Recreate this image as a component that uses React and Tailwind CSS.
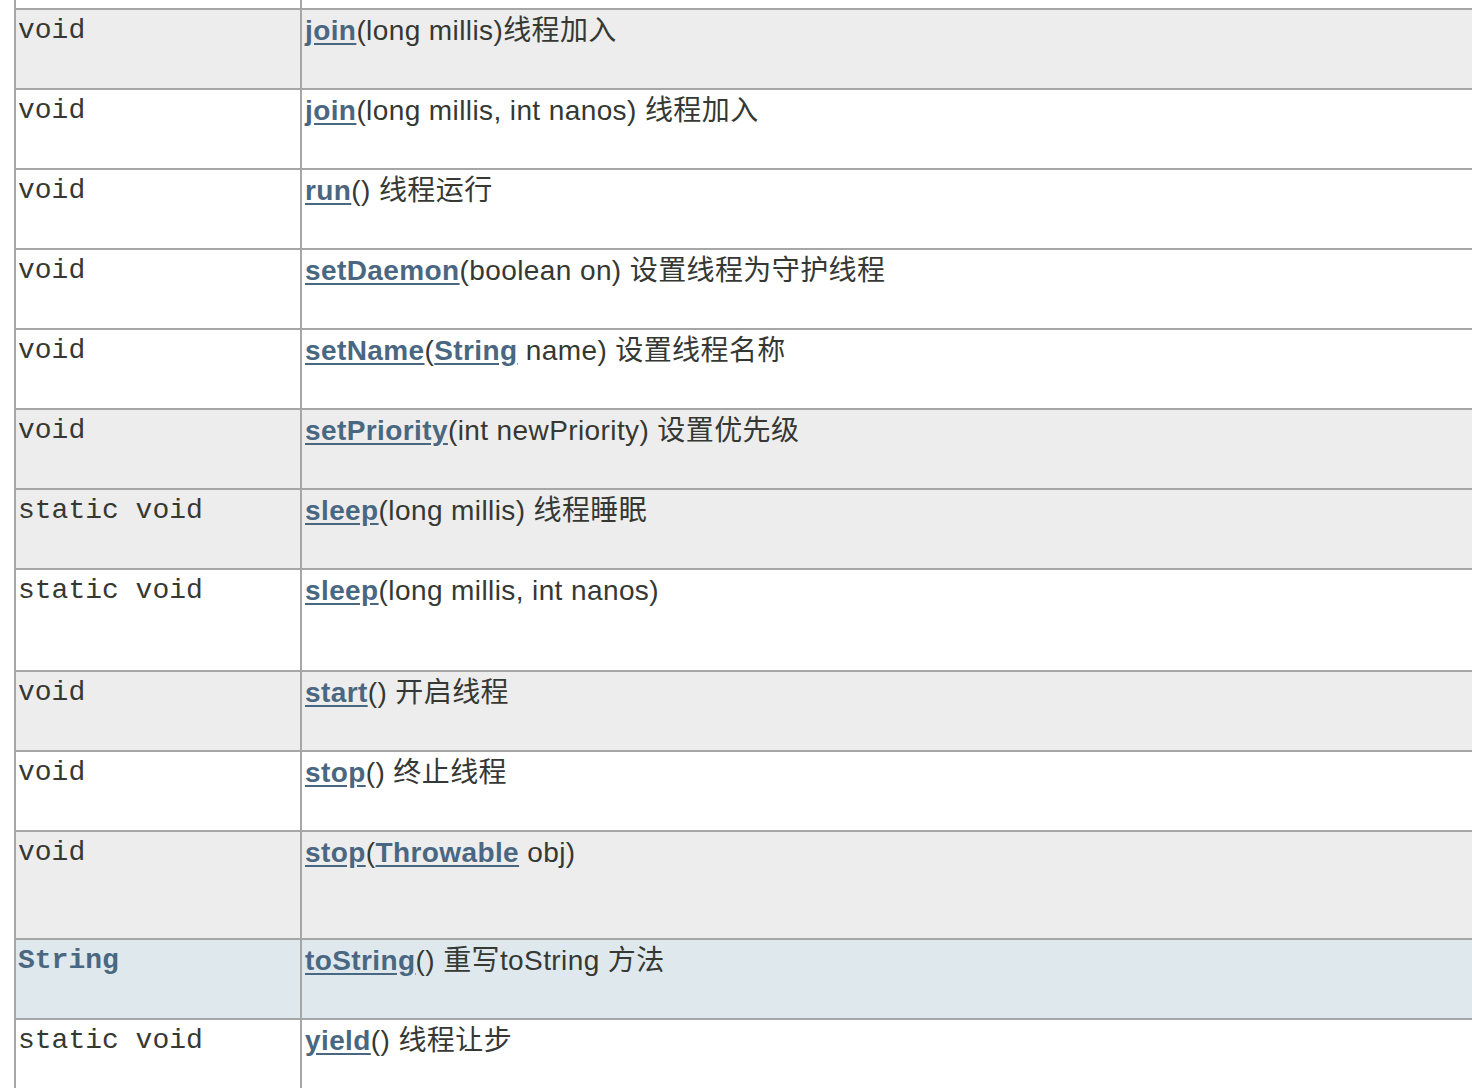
import React from "react";

// rows of the method summary table
const rows = [
  { bg: "bg-[#ededed]", type: "void", parts: [["l", "join"], ["t", "(long millis)线程加入"]] },
  { bg: "bg-white", type: "void", parts: [["l", "join"], ["t", "(long millis, int nanos) 线程加入"]] },
  { bg: "bg-white", type: "void", parts: [["l", "run"], ["t", "() 线程运行"]] },
  { bg: "bg-white", type: "void", parts: [["l", "setDaemon"], ["t", "(boolean on) 设置线程为守护线程"]] },
  { bg: "bg-white", type: "void", parts: [["l", "setName"], ["t", "("], ["l", "String"], ["t", " name) 设置线程名称"]] },
  { bg: "bg-[#ededed]", type: "void", parts: [["l", "setPriority"], ["t", "(int newPriority) 设置优先级"]] },
  { bg: "bg-[#ededed]", type: "static void", parts: [["l", "sleep"], ["t", "(long millis) 线程睡眠"]] },
  { bg: "bg-white", type: "static void", h: "h-[102px]", parts: [["l", "sleep"], ["t", "(long millis, int nanos)"]] },
  { bg: "bg-[#ededed]", type: "void", parts: [["l", "start"], ["t", "() 开启线程"]] },
  { bg: "bg-white", type: "void", parts: [["l", "stop"], ["t", "() 终止线程"]] },
  { bg: "bg-[#ededed]", type: "void", h: "h-[108px]", parts: [["l", "stop"], ["t", "("], ["l", "Throwable"], ["t", " obj)"]] },
  { bg: "bg-[#dfe9ed]", type: "String", strong: true, parts: [["l", "toString"], ["t", "() 重写toString 方法"]] },
  { bg: "bg-white", type: "static void", parts: [["l", "yield"], ["t", "() 线程让步"]] },
];

const Row = (props) => {
  const r = props.row;
  return (
    <div
      className={`grid grid-cols-[284px_1fr] border-t-2 border-[#a6a6a6] ${r.bg} ${r.h || "h-[80px]"}`}
    >
      <div
        className={`pl-[2px] pt-[4px] leading-[34px] text-[28px] font-['Liberation_Mono',monospace] whitespace-pre ${
          r.strong ? "font-bold text-[#4a6782]" : "text-[#353833]"
        }`}
      >
        {r.type}
      </div>
      <div className="border-l-2 border-[#a6a6a6] pl-[3px] pt-[4px] leading-[34px] text-[28px] tracking-[0.4px] text-[#353833] font-['Liberation_Sans','Noto_Sans_CJK_SC',sans-serif] whitespace-pre">
        {r.parts.map((p, i) =>
          p[0] === "l" ? (
            <a key={i} className="font-bold text-[#4a6782] underline underline-offset-[3px]">
              {p[1]}
            </a>
          ) : (
            <span key={i}>{p[1]}</span>
          )
        )}
      </div>
    </div>
  );
};

export default function App() {
  return (
    <div className="h-[1088px] w-[1472px] overflow-hidden bg-white">
      <div className="ml-[14px] border-l-2 border-[#a6a6a6]">
        {/* tail of the previous row */}
        <div className="grid grid-cols-[284px_1fr] h-[8px] bg-white">
          <div></div>
          <div className="border-l-2 border-[#a6a6a6]"></div>
        </div>
        {rows.map((r, i) => (
          <Row key={i} row={r} />
        ))}
      </div>
    </div>
  );
}
